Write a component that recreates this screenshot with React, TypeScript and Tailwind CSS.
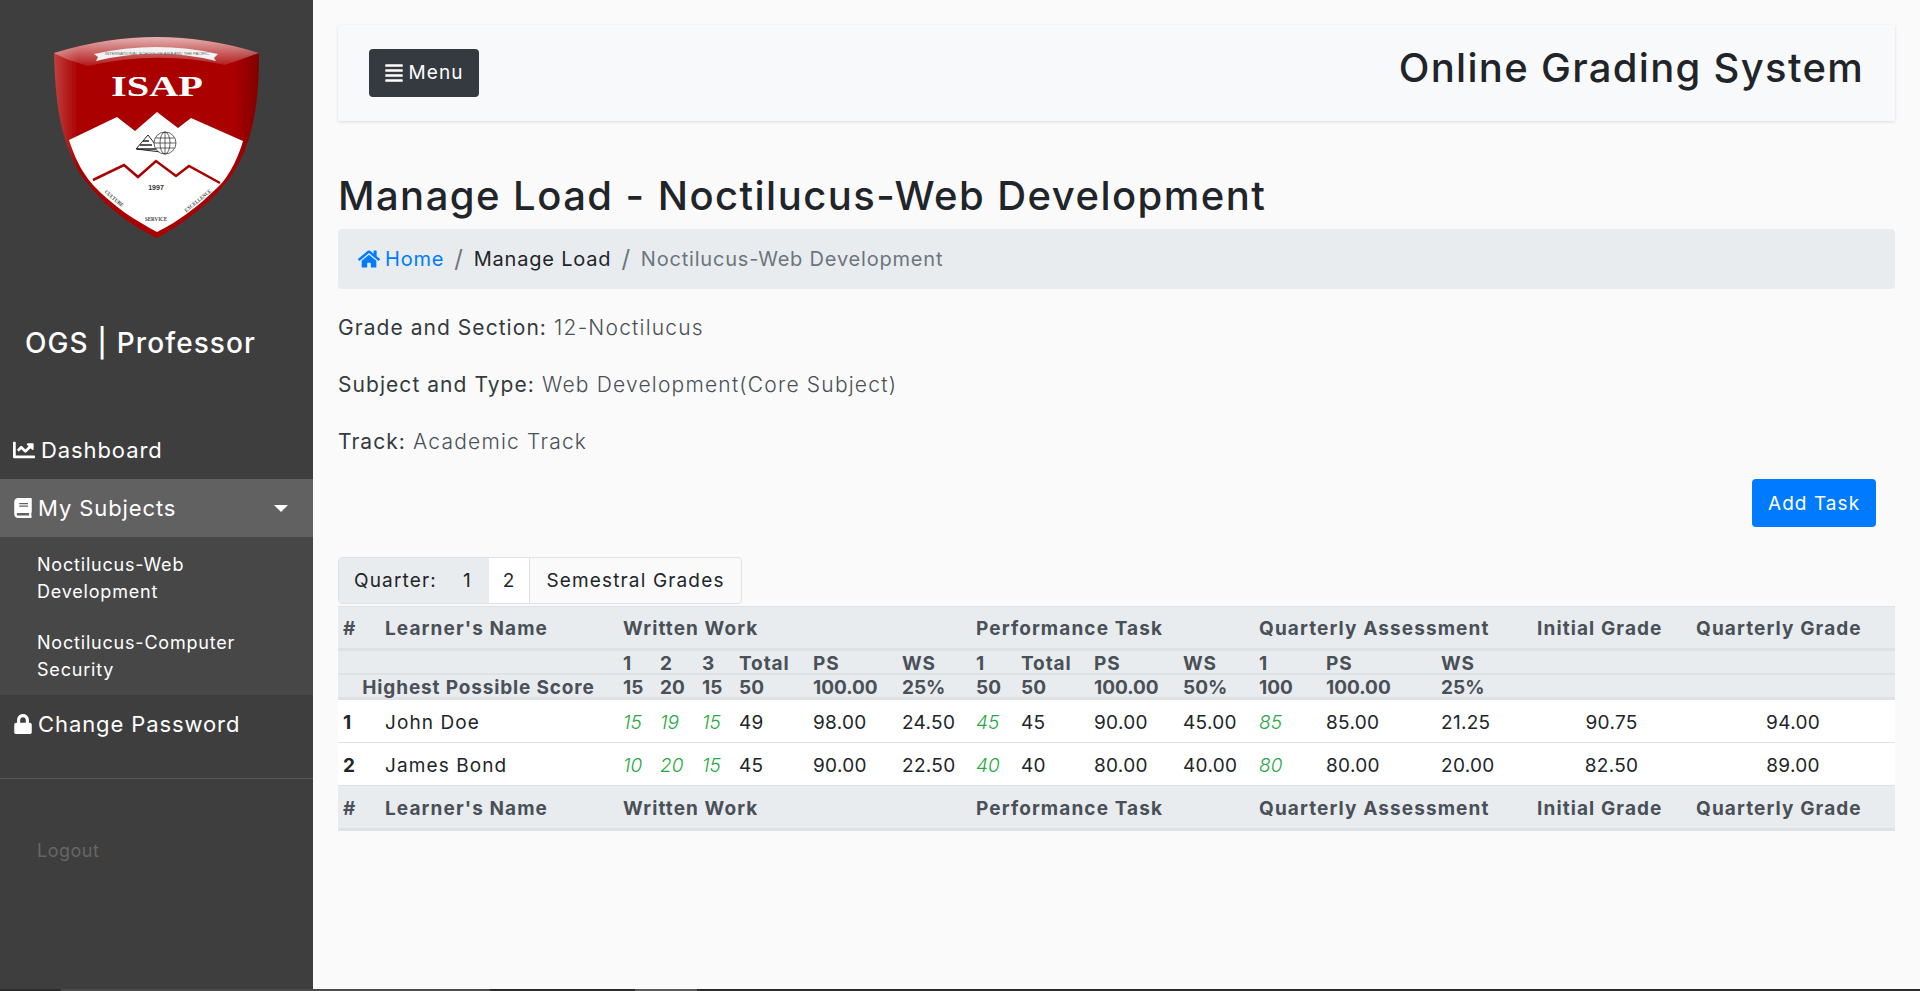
import React from 'react';
import { FaAlignJustify, FaBook, FaChartLine, FaHome, FaLock } from 'react-icons/fa';

const colWidths = [
  'w-[42px]', 'w-[238px]', 'w-[37px]', 'w-[42px]', 'w-[37px]', 'w-[74px]', 'w-[89px]', 'w-[74px]',
  'w-[45px]', 'w-[73px]', 'w-[89px]', 'w-[76px]', 'w-[67px]', 'w-[115px]', 'w-[96px]', 'w-[159px]', 'w-[204px]',
];

const learners = [
  {
    id: 1,
    name: 'John Doe',
    cells: [['15', '19', '15'], '49', '98.00', '24.50', ['45'], '45', '90.00', '45.00', ['85'], '85.00', '21.25', '90.75', '94.00'],
  },
  {
    id: 2,
    name: 'James Bond',
    cells: [['10', '20', '15'], '45', '90.00', '22.50', ['40'], '40', '80.00', '40.00', ['80'], '80.00', '20.00', '82.50', '89.00'],
  },
];

const Logo: React.FC = () => (
  <svg viewBox="0 0 240 230" className="ml-[30px] block h-[230px] w-[240px]">
    <defs>
      <linearGradient id="gloss" x1="0" y1="0" x2="0" y2="1">
        <stop offset="0" stopColor="#fff" stopOpacity="0.7" />
        <stop offset="1" stopColor="#fff" stopOpacity="0.1" />
      </linearGradient>
      <linearGradient id="sides" x1="0" y1="0" x2="1" y2="0">
        <stop offset="0" stopColor="#c04040" />
        <stop offset="0.12" stopColor="#aa0000" />
        <stop offset="0.88" stopColor="#aa0000" />
        <stop offset="1" stopColor="#800000" />
      </linearGradient>
      <filter id="soft">
        <feGaussianBlur stdDeviation="0.35" />
      </filter>
    </defs>
    <g filter="url(#soft)">
      <path d="M24 33Q127 1 229 33C229 80 224 118 205 150C185 182 150 205 127 218C100 205 68 182 48 150C30 118 25 80 24 33Z" fill="url(#sides)" />
      <path d="M39 120L87 97L105 111L127 92L148 108L161 98L213 121C206 145 195 160 190 165C165 190 145 203 127 212C105 200 85 188 63 165C50 150 44 135 39 120Z" fill="#fff" />
      <path d="M63 160L94 145L108 157L126 141L146 156L159 146L190 163" fill="none" stroke="#aa0000" strokeWidth="2.5" />
      <path d="M24 33Q127 1 229 33C215 38 205 42 195 45Q127 30 58 46C45 42 32 38 24 33Z" fill="url(#gloss)" />
      <path d="M64 34Q127 20 188 34L184 38L186 41Q127 26 66 41L68 37Z" fill="#f2f2f2" />
    </g>
    <text x="127" y="35" textAnchor="middle" fontSize="4" fill="#666" fontFamily="'Liberation Sans',sans-serif" textLength="104" lengthAdjust="spacingAndGlyphs">
      INTERNATIONAL SCHOOL OF ASIA AND THE PACIFIC
    </text>
    <text x="127" y="76" textAnchor="middle" fontSize="30" fontWeight="700" fill="#fff" fontFamily="'Liberation Serif',serif" textLength="92" lengthAdjust="spacingAndGlyphs">
      ISAP
    </text>
    <path d="M106 129L118 115L131 132L106 129Z" fill="#fff" stroke="#222" strokeWidth="1" />
    <path d="M110 125L122 125M113 121L119 121M107 129L126 129" stroke="#222" strokeWidth="1.6" />
    <g fill="none" stroke="#222" strokeWidth="0.7">
      <circle cx="135" cy="123" r="11" fill="#fff" />
      <ellipse cx="135" cy="123" rx="5" ry="11" />
      <path d="M135 112V134M124 123H146M125.5 118H144.5M125.5 128H144.5" />
    </g>
    <text x="126" y="170" textAnchor="middle" fontSize="7" fontWeight="700" fill="#333" fontFamily="'Liberation Sans',sans-serif">1997</text>
    <text x="83" y="180" textAnchor="middle" fontSize="5.5" fontWeight="700" fill="#444" fontFamily="'Liberation Serif',serif" textLength="23" lengthAdjust="spacingAndGlyphs" transform="rotate(40 83 180)">CULTURE</text>
    <text x="126" y="201" textAnchor="middle" fontSize="5.5" fontWeight="700" fill="#444" fontFamily="'Liberation Serif',serif" textLength="22" lengthAdjust="spacingAndGlyphs">SERVICE</text>
    <text x="169" y="182" textAnchor="middle" fontSize="5.5" fontWeight="700" fill="#444" fontFamily="'Liberation Serif',serif" textLength="33" lengthAdjust="spacingAndGlyphs" transform="rotate(-39 169 182)">EXCELLENCE</text>
  </svg>
);

const Sidebar: React.FC = () => (
  <aside className="flex w-[313px] shrink-0 flex-col bg-[#3e3e3e] text-white">
    <div className="pt-[20px]">
      <Logo />
    </div>
    <h3 className="mt-[77px] pl-[25px] text-[28px] leading-[32px] font-medium tracking-[1.1px]">OGS | Professor</h3>
    <ul className="mt-[62px] text-[22px] tracking-[0.9px]">
      <li className="flex h-[58px] items-center pl-[13px]">
        <FaChartLine className="mr-[6px] text-[22px]" />
        Dashboard
      </li>
      <li className="flex h-[58px] items-center justify-between bg-[#616161] pr-[25px] pl-[13px]">
        <span className="flex items-center">
          <FaBook className="mr-[5px] text-[20px]" />
          My Subjects
        </span>
        <span className="mt-[1px] border-x-[7px] border-t-[7px] border-x-transparent border-t-white" />
      </li>
      <li className="h-[158px] bg-[#474747] pt-[14px] pl-[37px] text-[18px] leading-[27px] tracking-[0.8px]">
        <div>
          Noctilucus-Web
          <br />
          Development
        </div>
        <div className="mt-[24px]">
          Noctilucus-Computer
          <br />
          Security
        </div>
      </li>
      <li className="flex h-[58px] items-center pl-[13px]">
        <FaLock className="mr-[5px] text-[20px]" />
        Change Password
      </li>
    </ul>
    <div className="mt-[25px] border-t border-[#595959] pt-[58px] pl-[37px] text-[18px] leading-[27px] tracking-[0.5px] text-[#666666]">
      Logout
    </div>
  </aside>
);

const Grades: React.FC = () => (
  <table className="w-[1557px] table-fixed border-separate border-spacing-0 text-[19px]">
    <colgroup>
      {colWidths.map((w, i) => (
        <col key={i} className={w} />
      ))}
    </colgroup>
    <thead className="bg-[#e9ecef] text-[#495057]">
      <tr>
        <HeadRow top />
      </tr>
      <tr className="leading-[19px]">
        <th colSpan={2} className="h-[24px] border-b-2 border-[#dee2e6]" />
        {['1', '2', '3', 'Total', 'PS', 'WS', '1', 'Total', 'PS', 'WS', '1', 'PS', 'WS'].map((t, i) => (
          <th key={i} className="h-[24px] border-b-2 border-[#dee2e6] px-[5px] pt-[2px] text-left font-bold tracking-[0.9px]">{t}</th>
        ))}
        <th colSpan={2} className="border-b-2 border-[#dee2e6]" />
      </tr>
      <tr className="leading-[19px]">
        <th colSpan={2} className="h-[25px] border-b-[3px] border-[#dee2e6] pt-[3px] pl-[1px] text-center font-bold tracking-[0.85px]">Highest Possible Score</th>
        {['15', '20', '15', '50', '100.00', '25%', '50', '50', '100.00', '50%', '100', '100.00', '25%'].map((t, i) => (
          <th key={i} className="h-[25px] border-b-[3px] border-[#dee2e6] px-[5px] pt-[3px] text-left font-bold">{t}</th>
        ))}
        <th colSpan={2} className="border-b-[3px] border-[#dee2e6]" />
      </tr>
    </thead>
    <tbody className="bg-white text-[#212529]">
      {learners.map((l) => (
        <tr key={l.id}>
          <th className="h-[43px] border-b border-[#dee2e6] px-[5px] pt-[4px] text-left font-bold">{l.id}</th>
          <td className="border-b border-[#dee2e6] px-[5px] pt-[4px] tracking-[1.1px]">{l.name}</td>
          {l.cells.flatMap((c, i) =>
            Array.isArray(c)
              ? c.map((s, j) => (
                  <td key={`${i}-${j}`} className="border-b border-[#dee2e6] px-[5px] pt-[4px] font-light text-[#28a745] italic">{s}</td>
                ))
              : [
                  <td key={i} className={`border-b border-[#dee2e6] px-[5px] pt-[4px] tracking-[0.3px] ${i >= 11 ? 'text-center' : ''}`}>{c}</td>,
                ],
          )}
        </tr>
      ))}
    </tbody>
    <tfoot className="bg-[#e9ecef] text-[#495057]">
      <tr>
        <HeadRow />
      </tr>
    </tfoot>
  </table>
);

const HeadRow: React.FC<{ top?: boolean }> = ({ top }) => {
  const cls = `h-[45px] border-b-[3px] border-[#dee2e6] px-[5px] pt-[4px] text-left font-bold tracking-[1.1px] ${top ? 'border-t' : ''}`;
  return (
    <>
      <th className={cls}>#</th>
      <th className={cls}>Learner's Name</th>
      <th colSpan={6} className={cls}>Written Work</th>
      <th colSpan={4} className={cls}>Performance Task</th>
      <th colSpan={3} className={cls}>Quarterly Assessment</th>
      <th className={cls}>Initial Grade</th>
      <th className={cls}>Quarterly Grade</th>
    </>
  );
};

export default function App() {
  return (
    <div className="flex h-[991px] flex-col overflow-hidden bg-[#fafafa] font-['Inter',sans-serif]">
      <div className="flex min-h-0 flex-1">
        <Sidebar />
        <main className="flex-1 pt-[25px] pr-[25px] pl-[25px] text-[#212529]">
          <nav className="flex h-[96px] items-center justify-between bg-[#f8f9fa] pr-[31px] pl-[31px] shadow-[0_1px_3px_rgba(0,0,0,0.12)]">
            <button className="flex h-[48px] w-[110px] items-center justify-center rounded-[4px] bg-[#343a40] text-[19px] tracking-[1.1px] text-white">
              <FaAlignJustify className="mr-[4px] text-[20px]" />
              Menu
            </button>
            <div className="-mt-[10px] text-[40px] leading-[48px] font-medium tracking-[1.3px]">Online Grading System</div>
          </nav>
          <h1 className="mt-[51px] text-[40px] leading-[48px] font-medium tracking-[1.45px]">Manage Load - Noctilucus-Web Development</h1>
          <ol className="mt-[9px] flex h-[60px] items-center rounded-[4px] bg-[#e9ecef] pl-[20px] text-[20px] tracking-[0.8px]">
            <li className="flex items-center text-[#007bff]">
              <FaHome className="mr-[5px] text-[22px]" />
              Home
            </li>
            <li className="px-[10px] text-[24px] text-[#6c757d]">/</li>
            <li className="text-[#212529]">Manage Load</li>
            <li className="px-[10px] text-[24px] text-[#6c757d]">/</li>
            <li className="text-[#6c757d]">Noctilucus-Web Development</li>
          </ol>
          <div className="mt-[24px] text-[21px] leading-[30px] font-light tracking-[1.2px] text-[#495057]">
            <p><span className="font-normal tracking-[1.05px] text-[#343a40]">Grade and Section:</span> 12-Noctilucus</p>
            <p className="mt-[27px]"><span className="font-normal tracking-[1.05px] text-[#343a40]">Subject and Type:</span> Web Development(Core Subject)</p>
            <p className="mt-[27px]"><span className="font-normal tracking-[1.05px] text-[#343a40]">Track:</span> Academic Track</p>
          </div>
          <div className="mt-[22px] flex justify-end pr-[19px]">
            <button className="h-[48px] w-[124px] rounded-[4px] bg-[#007bff] pt-[2px] text-[19px] tracking-[1.05px] text-white">Add Task</button>
          </div>
          <div className="mt-[30px] flex h-[47px] w-[404px] rounded-[4px] border border-[#dee2e6] pt-0 text-[19px] tracking-[1.15px] text-[#212529]">
            <div className="flex w-[150px] items-center justify-between rounded-l-[4px] bg-[#e9ecef] pt-[2px] pr-[17px] pl-[15px]">
              <span>Quarter:</span>
              <span>1</span>
            </div>
            <div className="flex w-[41px] items-center justify-center border-r border-[#dee2e6] bg-white pt-[2px]">2</div>
            <div className="flex flex-1 items-center justify-center pt-[2px]">Semestral Grades</div>
          </div>
          <div className="mt-[2px]">
            <Grades />
          </div>
        </main>
      </div>
      <div className="flex h-[2px] shrink-0 bg-[#2b2b2b]">
        <div className="w-[61px]" />
        <div className="w-[429px] bg-[#4a4a4a]" />
        <div className="w-[145px]" />
        <div className="w-[62px] bg-[#5a5a5a]" />
      </div>
    </div>
  );
}
